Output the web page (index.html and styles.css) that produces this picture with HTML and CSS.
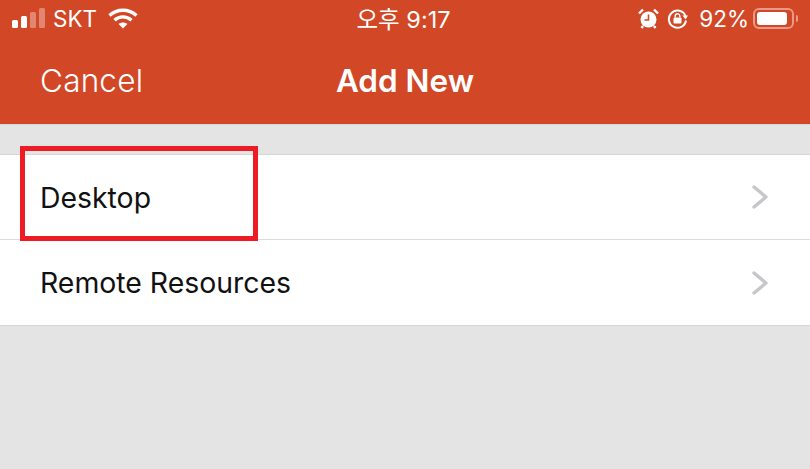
FILE: index.html
```html
<!DOCTYPE html>
<html lang="en">
<head>
    <meta charset="UTF-8">
    <title>Add New</title>
    <link rel="stylesheet" href="styles.css">
</head>
<body>

    <header class="top">
        <div class="status">
            <div class="status-left">
                <svg class="signal" width="34" height="20" viewBox="0 0 34 20">
                    <rect x="0" y="12" width="6" height="8" rx="1.5" fill="#fff"/>
                    <rect x="9" y="8" width="6" height="12" rx="1.5" fill="#fff"/>
                    <rect x="18" y="4" width="6" height="16" rx="1.5" fill="#fff" opacity="0.35"/>
                    <rect x="27" y="0" width="6" height="20" rx="1.5" fill="#fff" opacity="0.35"/>
                </svg>
                <span class="carrier">SKT</span>
                <svg class="wifi" width="30" height="21" viewBox="0 0 30 21" fill="none" stroke="#fff" stroke-width="3.4">
                    <path d="M1.5 7.5C9 0.5 21 0.5 28.5 7.5"/>
                    <path d="M6.5 12.2C11.5 7.8 18.5 7.8 23.5 12.2"/>
                    <path d="M15 20.5L10.6 16C13 14 17 14 19.4 16Z" fill="#fff" stroke="none"/>
                </svg>
            </div>
            <div class="status-time">오후 9:17</div>
            <div class="status-right">
                <svg width="21" height="21" viewBox="0 0 21 21">
                    <circle cx="10.5" cy="11.5" r="8" fill="#fff"/>
                    <path d="M10.5 6.5V12H6.5" fill="none" stroke="#d24726" stroke-width="1.6"/>
                    <path d="M1 5.5L5 1.5M20 5.5L16 1.5M5 18L3.5 20M16 18L17.5 20" stroke="#fff" stroke-width="2.4"/>
                </svg>
                <svg class="lock" width="21" height="21" viewBox="0 0 21 21">
                    <path d="M18.5 8A8.6 8.6 0 1 0 19 12.5" fill="none" stroke="#fff" stroke-width="2"/>
                    <path d="M15.5 7.5H21L18.6 11.5Z" fill="#fff"/>
                    <rect x="6.5" y="9.5" width="8" height="6" rx="1" fill="#fff"/>
                    <path d="M8.2 9.5V8a2.3 2.3 0 0 1 4.6 0v1.5" fill="none" stroke="#fff" stroke-width="1.4"/>
                </svg>
                <span class="percent">92%</span>
                <div class="battery">
                    <div class="battery-body"><div class="battery-fill"></div></div>
                    <div class="battery-tip"></div>
                </div>
            </div>
        </div>
        <nav class="navbar">
            <span class="cancel">Cancel</span>
            <span class="title">Add New</span>
        </nav>
    </header>

    <ul class="list">
        <li class="list-item">
            <span>Desktop</span>
            <svg class="chevron" width="18" height="26" viewBox="0 0 18 26">
                <path d="M3 3L15 13L3 23" fill="none" stroke="#c6c6cb" stroke-width="3.4" stroke-linecap="round" stroke-linejoin="round"/>
            </svg>
        </li>
        <li class="list-item">
            <span>Remote Resources</span>
            <svg class="chevron" width="18" height="26" viewBox="0 0 18 26">
                <path d="M3 3L15 13L3 23" fill="none" stroke="#c6c6cb" stroke-width="3.4" stroke-linecap="round" stroke-linejoin="round"/>
            </svg>
        </li>
    </ul>

    <!-- Red highlight drawn over the first row -->
    <div class="highlight"></div>

</body>
</html>
```

FILE: styles.css
```css
html, body {
    margin: 0;
    padding: 0;
    height: 100%;
    overflow: hidden;
}

body {
    position: relative;
    background-color: #e4e4e4;
    font-family: "Inter", "Noto Sans CJK KR", sans-serif;
}

.top {
    height: 124px;
    background-color: #d24726;
    color: #fff;
    border-bottom: 1px solid #d6d6d6;
}

.status {
    height: 36px;
    display: grid;
    grid-template-columns: 1fr auto 1fr;
    align-items: center;
    font-size: 22px;
    padding: 0 12px;
}

.status-left {
    display: flex;
    align-items: center;
    gap: 8px;
}

.carrier {
    margin-left: -1px;
    font-size: 22.5px;
}

.wifi {
    margin-left: 3px;
}

.status-time {
    font-size: 23.5px;
    padding-right: 3px;
}

.status-right {
    display: flex;
    align-items: center;
    justify-content: flex-end;
    gap: 9px;
}

.lock {
    margin: 0 3px 0 -1px;
}

.percent {
    margin-left: -1px;
    font-size: 22.5px;
}

.battery {
    display: flex;
    align-items: center;
    gap: 2px;
    margin-left: -5px;
}

.battery-body {
    width: 41px;
    height: 21px;
    box-sizing: border-box;
    border: 2px solid rgba(255, 255, 255, 0.45);
    border-radius: 6px;
    padding: 2px;
}

.battery-fill {
    width: 92%;
    height: 100%;
    background-color: #fff;
    border-radius: 3px;
}

.battery-tip {
    width: 2px;
    height: 7px;
    background-color: rgba(255, 255, 255, 0.45);
    border-radius: 0 2px 2px 0;
}

.navbar {
    height: 88px;
    display: flex;
    align-items: center;
    justify-content: center;
    position: relative;
    font-size: 31.5px;
}

.cancel {
    position: absolute;
    left: 40px;
    font-weight: 300;
    letter-spacing: 0.2px;
}

.title {
    font-weight: 600;
}

.list {
    list-style: none;
    margin: 29px 0 0;
    padding: 0;
    background-color: #fff;
    border-top: 1px solid #d6d6d6;
    border-bottom: 1px solid #d6d6d6;
}

.list-item {
    height: 84px;
    display: flex;
    align-items: center;
    justify-content: space-between;
    padding: 0 41px 0 40px;
    font-size: 28.4px;
    color: #111;
}

.list-item + .list-item {
    height: 85px;
    border-top: 1px solid #dcdcdc;
}

.highlight {
    position: absolute;
    left: 20px;
    top: 146px;
    width: 238px;
    height: 95px;
    box-sizing: border-box;
    border: 5px solid #ed1c24;
}
```
